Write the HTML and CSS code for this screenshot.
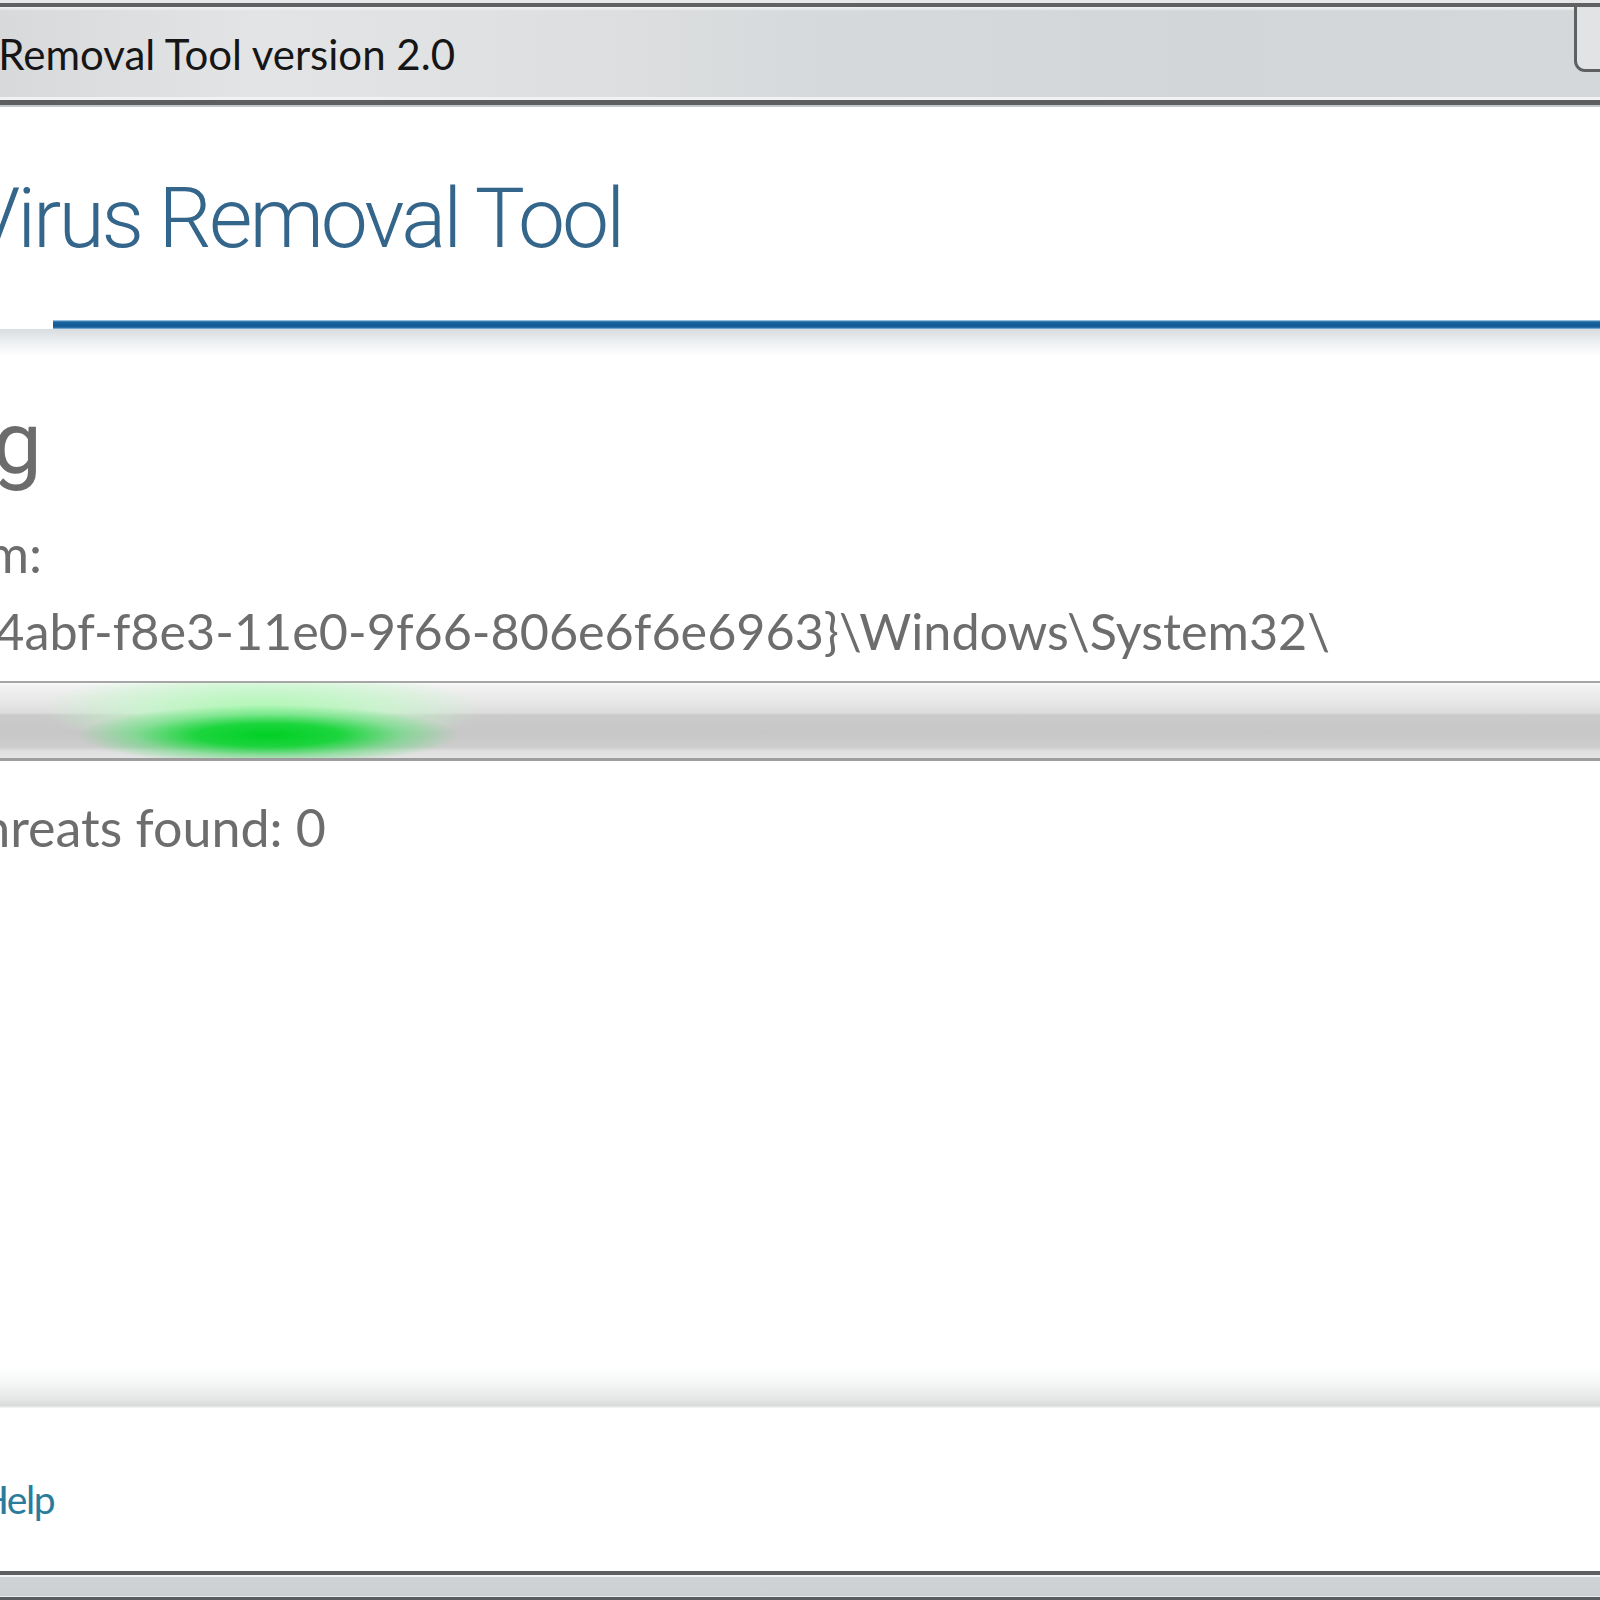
FILE: index.html
```html
<!DOCTYPE html>
<html lang="en">
<head>
<meta charset="utf-8">
<title>Virus Removal Tool version 2.0</title>
<link rel="stylesheet" href="styles.css">
</head>
<body>
<div class="window">
  <div class="titlebar">
    <div class="clip title-clip"><span class="title-text">Kaspersky Virus Removal Tool version 2.0</span></div>
    <div class="title-btn"></div>
  </div>
  <div class="client">
    <div class="banner">
      <div class="clip banner-clip"><span class="banner-text">Kaspersky Virus Removal Tool</span></div>
    </div>
    <div class="rule"><div class="rule-left"></div><div class="rule-blue"></div></div>
    <div class="rule-shadow"></div>
    <div class="status">
      <div class="clip scan-clip"><span class="scan-title">Scanning</span></div>
      <div class="clip item-clip"><span class="body-text">Scanning item:</span></div>
      <div class="clip path-clip"><span class="body-text path-text">\\?\Volume{7d2c4abf-f8e3-11e0-9f66-806e6f6e6963}\Windows\System32\</span></div>
      <div class="progress"></div>
      <div class="clip threats-clip"><span class="body-text">Threats found: 0</span></div>
    </div>
    <div class="spacer"></div>
    <div class="footer-shadow"></div>
    <div class="footer">
      <div class="clip help-clip"><a class="help-link" href="#">Help</a></div>
    </div>
  </div>
  <div class="frame-bottom"></div>
</div>
</body>
</html>
```

FILE: styles.css
```css
html, body {
  margin: 0;
  padding: 0;
}

body {
  width: 1600px;
  height: 1600px;
  overflow: hidden;
  background: #ffffff;
  font-family: "Lato", "Open Sans", sans-serif;
}

.window {
  display: flex;
  flex-direction: column;
  height: 1600px;
}

/* text clipped at the left edge: right-aligned inside a box that ends where the text ends */
.clip {
  display: flex;
  justify-content: flex-end;
  flex-shrink: 0;
  white-space: nowrap;
}

.clip > * {
  flex-shrink: 0;
}

/* ---------- title bar ---------- */
.titlebar {
  flex: 0 0 107px;
  display: flex;
  align-items: flex-start;
  background:
    linear-gradient(to bottom,
      #e6e7e8 0, #e6e7e8 3px,
      #5f6163 3px, #5f6163 7px,
      #f3f4f4 7px, rgba(255,255,255,0) 11px,
      rgba(255,255,255,0) 97px, #f1f2f2 97px, #f1f2f2 100px,
      #5c5e60 100px, #5c5e60 105px,
      #c4c7c9 105px, #c4c7c9 107px),
    linear-gradient(to right, #d7d9db 0%, #e3e4e5 16%, #e0e1e2 30%, #d7dadc 50%, #d3d6d9 75%, #d5d8db 100%);
}

.title-clip {
  width: 455px;
  margin-top: 33px;
}

.title-text {
  font: 400 42px/1 "Lato", "Open Sans", sans-serif;
  color: #161616;
}

.title-btn {
  margin-left: auto;
  margin-top: 7px;
  width: 23px;
  height: 62px;
  border-left: 3px solid #5d5f61;
  border-bottom: 3px solid #5d5f61;
  border-bottom-left-radius: 11px;
  background: #e1e3e5;
}

/* ---------- client area ---------- */
.client {
  flex: 1;
  display: flex;
  flex-direction: column;
  background: #ffffff;
}

.banner {
  flex: 0 0 213px;
}

.banner-clip {
  width: 622px;
  padding-top: 70px;
}

.banner-text {
  font: 300 84px/1 "Roboto", "Open Sans", sans-serif;
  letter-spacing: -3px;
  color: #34658b;
}

.rule {
  flex: 0 0 9px;
  display: flex;
}

.rule-left {
  width: 53px;
}

.rule-blue {
  flex: 1;
  background: linear-gradient(to bottom,
    #cfe6f6 0, #5a97c7 1px, #1a64a0 2px, #115a96 6px, #2f74ac 8px, #b6d4ea 9px);
}

.rule-shadow {
  flex: 0 0 27px;
  background: linear-gradient(to bottom, #d9dde0 0%, #eceef0 45%, #ffffff 100%);
}

.status {
  display: flex;
  flex-direction: column;
  padding-top: 43px;
}

.scan-clip {
  width: 42px;
}

.scan-title {
  font: 400 88px/1 "Roboto", "Open Sans", sans-serif;
  color: #6c6c6c;
}

.body-text {
  font: 400 52px/1 "Lato", "Open Sans", sans-serif;
  color: #6d6d6d;
}

.path-text {
  font-size: 50.3px;
}

.item-clip {
  width: 42px;
  margin-top: 40px;
}

.path-clip {
  width: 1330px;
  margin-top: 27px;
}

.progress {
  margin-top: 25px;
  height: 75px;
  border-top: 2px solid #a6a6a6;
  border-bottom: 3px solid #9d9d9d;
  background:
    radial-gradient(ellipse 190px 30px at 268px 52px,
      rgba(0,208,36,1) 0%, rgba(14,212,50,0.92) 38%, rgba(70,218,100,0.5) 70%, rgba(130,228,150,0) 100%),
    radial-gradient(ellipse 220px 42px at 262px 26px,
      rgba(175,248,180,1) 0%, rgba(195,248,200,0.7) 55%, rgba(220,250,222,0) 100%),
    linear-gradient(to bottom,
      #fbfbfb 0, #f2f2f2 3px, #e6e6e6 20px, #dcdcdc 30px,
      #cbcbcb 32px, #c7c7c7 50px, #cdcdcd 64px, #dedede 68px, #e4e4e4 75px);
}

.threats-clip {
  width: 326px;
  margin-top: 40px;
}

.spacer {
  flex: 1;
}

.footer-shadow {
  flex: 0 0 41px;
  background: linear-gradient(to bottom, #ffffff 0%, #f6f7f7 35%, #e4e6e6 80%, #dadcdc 94%, #f6f6f6 100%);
}

.footer {
  flex: 0 0 163px;
}

.help-clip {
  width: 54px;
  margin-top: 72px;
}

.help-link {
  font: 400 39px/1 "Lato", "Open Sans", sans-serif;
  letter-spacing: -1.5px;
  color: #2a7c9c;
  text-decoration: none;
}

/* ---------- bottom frame ---------- */
.frame-bottom {
  flex: 0 0 29px;
  background: linear-gradient(to bottom,
    #5e6062 0, #5e6062 4px,
    #f2f3f3 4px, #f2f3f3 6px,
    #d0d3d6 6px, #cdd0d3 25px,
    #eceded 25px, #eceded 26px,
    #5a5c5e 26px, #5a5c5e 29px);
}
```
